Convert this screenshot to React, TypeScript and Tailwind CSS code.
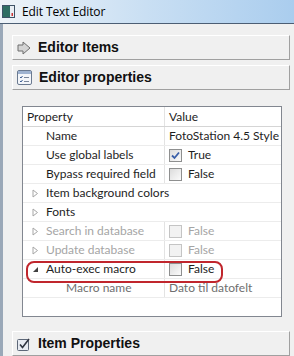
const Check = ({ checked, disabled }: { checked?: boolean; disabled?: boolean }) => (
  <span
    className={`inline-flex items-center justify-center w-[13px] h-[13px] border ${
      disabled ? "border-[#c4c4c4] bg-[#f2f2f2]" : "border-[#8e8f8f] bg-gradient-to-br from-[#dcdcdc] to-[#fbfbfb]"
    }`}
  >
    {checked && (
      <svg width="9" height="9" viewBox="0 0 9 9">
        <path d="M1 4.5 L3.5 7 L8 1.5" fill="none" stroke="#3a5fa8" strokeWidth="1.8" />
      </svg>
    )}
  </span>
);

const Tri = ({ open }: { open?: boolean }) =>
  open ? (
    <svg width="7" height="7" viewBox="0 0 7 7" className="mt-[1px]">
      <path d="M6 1 L6 6 L1 6 Z" fill="#404040" />
    </svg>
  ) : (
    <svg width="7" height="9" viewBox="0 0 7 9">
      <path d="M1 1 L5.5 4.5 L1 8 Z" fill="none" stroke="#a6a6a6" />
    </svg>
  );

type Row = {
  label: string;
  indent: number;
  tri?: "closed" | "open";
  value?: string;
  check?: boolean;
  checked?: boolean;
  disabled?: boolean;
  sub?: boolean;
  span?: boolean;
};

const rows: Row[] = [
  { label: "Name", indent: 23, value: "FotoStation 4.5 Style" },
  { label: "Use global labels", indent: 23, value: "True", check: true, checked: true },
  { label: "Bypass required field", indent: 23, value: "False", check: true },
  { label: "Item background colors", indent: 23, tri: "closed", span: true },
  { label: "Fonts", indent: 23, tri: "closed", span: true },
  { label: "Search in database", indent: 23, tri: "closed", value: "False", check: true, disabled: true },
  { label: "Update database", indent: 23, tri: "closed", value: "False", check: true, disabled: true },
  { label: "Auto-exec macro", indent: 23, tri: "open", value: "False", check: true },
  { label: "Macro name", indent: 43, value: "Dato til datofelt", sub: true },
];

const Header = ({ icon, title }: { icon: React.ReactNode; title: string }) => (
  <div className="flex items-center h-[25px] w-[278px] border-t border-l border-t-white border-l-white border-b border-r border-b-[#a0a0a0] border-r-[#a0a0a0] pl-[4px] gap-[7px]">
    {icon}
    <span className="font-['Liberation_Sans',sans-serif] font-bold text-[14px] text-[#111]">{title}</span>
  </div>
);

const ArrowIcon = () => (
  <svg width="14" height="14" viewBox="0 0 14 14">
    <path d="M1 4 L6 4 L6 1 L13 7 L6 13 L6 10 L1 10 Z" fill="#d4d4d4" stroke="#6e6e6e" strokeLinejoin="round" />
  </svg>
);

const FormIcon = () => (
  <svg width="15" height="15" viewBox="0 0 15 15">
    <rect x="0.5" y="0.5" width="14" height="14" rx="1.5" fill="#f4f6fa" stroke="#6b7a90" />
    <rect x="1" y="1" width="13" height="3" fill="#9fb3d1" />
    <path d="M3 7 L4 8 L5.5 6" fill="none" stroke="#3d5f94" />
    <path d="M3 11 L4 12 L5.5 10" fill="none" stroke="#3d5f94" />
    <path d="M7 7.5 H12 M7 11.5 H12" stroke="#7a869a" />
  </svg>
);

const CheckIcon = () => (
  <svg width="14" height="14" viewBox="0 0 14 14">
    <rect x="0.5" y="2.5" width="11" height="11" rx="1" fill="#e7ebf2" stroke="#5d6778" />
    <path d="M3 7.5 L5.5 10.5 L12 2" fill="none" stroke="#2e3440" strokeWidth="1.6" />
  </svg>
);

const App = () => {
  return (
    <div className="relative w-[294px] h-[356px] overflow-hidden bg-[#f0f0f0] font-['Lato',sans-serif] text-[12px] text-[#1e1e1e]">
      {/* title bar */}
      <div className="h-[24px] flex items-center gap-[7px] pl-[2px] bg-gradient-to-r from-[#eef3f8] via-[#c9dff3] to-[#aacdee] border-b border-[#4c5e74]">
        <svg width="13" height="13" viewBox="0 0 13 13">
          <rect x="0.5" y="0.5" width="12" height="12" fill="#e8eef4" stroke="#3f5367" />
          <rect x="1" y="1" width="7" height="11" fill="#2f6e63" />
          <rect x="9.5" y="8" width="1.5" height="3" fill="#c33" />
        </svg>
        <span className="font-['Open_Sans',sans-serif] text-[12px] text-black tracking-[-0.1px]">Edit Text Editor</span>
      </div>

      <div className="flex flex-col h-[332px] border-l-[3px] border-[#9aa8b8] pl-[9px] pt-[11px]">
        <Header icon={<ArrowIcon />} title="Editor Items" />
        <div className="mt-[5px]">
          <Header icon={<FormIcon />} title="Editor properties" />
        </div>

        {/* property grid */}
        <div className="ml-[10px] mt-[16px] w-[260px] h-[211px] bg-white border border-[#828790] flex flex-col">
          <div className="flex h-[20px] border-b border-[#d5d5d5] items-center shrink-0">
            <div className="w-[142px] pl-[4px] h-full flex items-center border-r border-[#e3e3e3]">Property</div>
            <div className="pl-[4px]">Value</div>
          </div>
          {rows.map((r) => (
            <div key={r.label} className="flex h-[19px] border-b border-[#ececec] items-center shrink-0">
              <div
                className={`${r.span ? "w-full" : "w-[142px] border-r border-[#e3e3e3]"} h-full flex items-center relative whitespace-nowrap overflow-hidden ${
                  r.disabled ? "text-[#a5a5a5]" : ""
                } ${r.sub ? "text-[#6f6f6f]" : ""}`}
                style={{ paddingLeft: r.indent }}
              >
                {r.tri && (
                  <span className="absolute left-[9px] top-0 h-full flex items-center">
                    <Tri open={r.tri === "open"} />
                  </span>
                )}
                {r.label}
              </div>
              {!r.span && (
                <div
                  className={`flex items-center gap-[6px] pl-[4px] whitespace-nowrap ${
                    r.disabled ? "text-[#a5a5a5]" : ""
                  } ${r.sub ? "text-[#6f6f6f]" : ""}`}
                >
                  {r.check && <Check checked={r.checked} disabled={r.disabled} />}
                  {r.value}
                </div>
              )}
            </div>
          ))}
        </div>

        <div className="mt-[14px]">
          <Header icon={<CheckIcon />} title="Item Properties" />
        </div>
      </div>

      {/* red annotation */}
      <div className="absolute left-[26px] top-[261px] w-[197px] h-[22px] border-2 border-[#c0262d] rounded-[8px]" />
    </div>
  );
};

export default App;
